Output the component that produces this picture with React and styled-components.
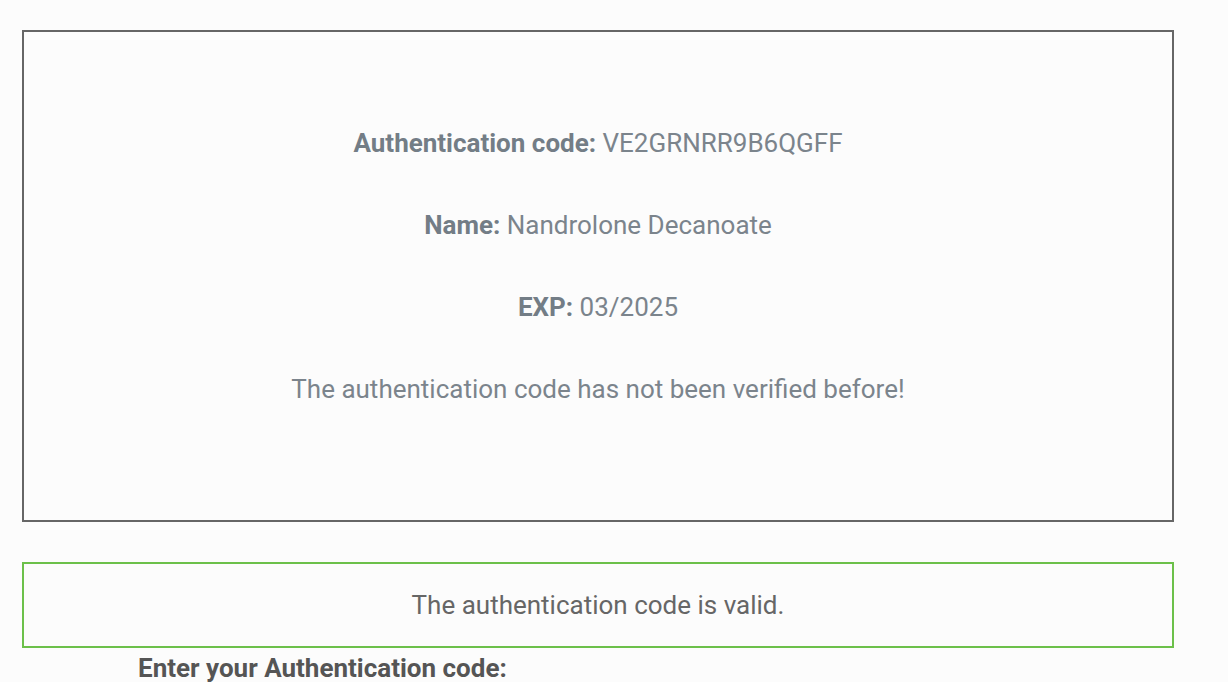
import React from "react";
import styled, { createGlobalStyle } from "styled-components";

const GlobalStyle = createGlobalStyle`
  html, body {
    margin: 0;
    padding: 0;
    background: #fcfcfc;
    font-family: Roboto, "Liberation Sans", sans-serif;
    overflow: hidden;
  }
`;

const Page = styled.div`
  width: 1152px;
  padding: 30px 54px 0 22px;
`;

const ResultBox = styled.div`
  border: 2px solid #666;
  padding: 95px 20px 115px;
  display: flex;
  flex-direction: column;
  gap: 50px;
  text-align: center;
`;

const Line = styled.p`
  margin: 0;
  font-size: 26px;
  line-height: 32px;
  color: #7b848c;

  b {
    font-weight: 700;
    color: #737d86;
  }
`;

const Alert = styled.div`
  margin-top: 40px;
  border: 2px solid #6cc04a;
  padding: 25px 20px;
  text-align: center;
  font-size: 26px;
  line-height: 32px;
  color: #666;
`;

const Label = styled.label`
  display: block;
  margin: 4px 0 0 116px;
  font-size: 26px;
  line-height: 32px;
  font-weight: 700;
  color: #555;
`;

const App = () => (
  <Page>
    <GlobalStyle />
    <ResultBox>
      <Line>
        <b>Authentication code:</b> VE2GRNRR9B6QGFF
      </Line>
      <Line>
        <b>Name:</b> Nandrolone Decanoate
      </Line>
      <Line>
        <b>EXP:</b> 03/2025
      </Line>
      <Line>The authentication code has not been verified before!</Line>
    </ResultBox>
    <Alert>The authentication code is valid.</Alert>
    <Label>Enter your Authentication code:</Label>
  </Page>
);

export default App;
